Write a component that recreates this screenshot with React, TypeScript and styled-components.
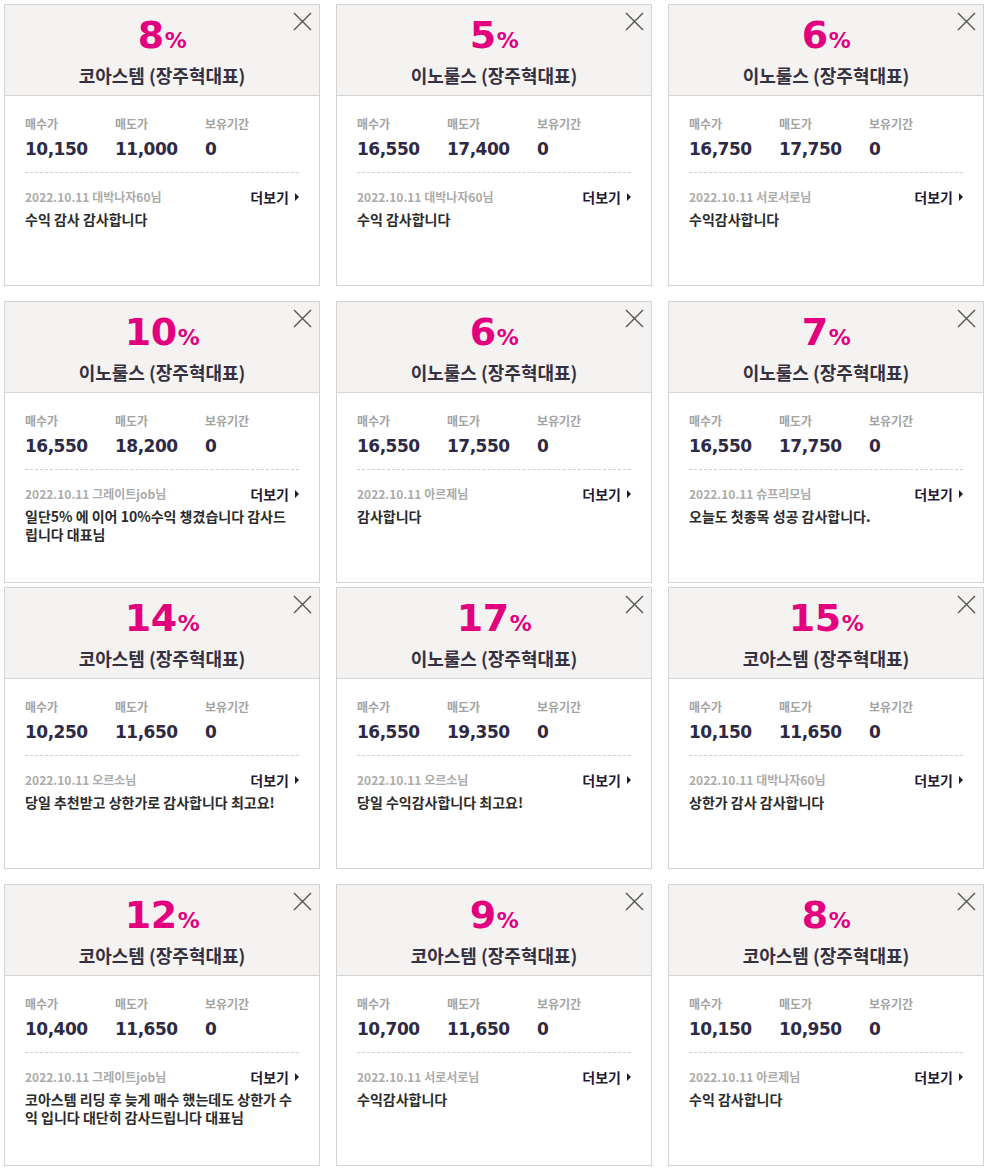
import React from "react";
import styled, { createGlobalStyle } from "styled-components";

const Global = createGlobalStyle`
  html, body { margin: 0; padding: 0; background: #fff; }
  body { font-family: "Noto Sans CJK KR", "Noto Sans", sans-serif; }
  * { box-sizing: border-box; }
`;

const Page = styled.div`
  width: 986px;
  padding: 4px 2px 4px 4px;
`;

const Row = styled.div<{ $gap: number }>`
  display: flex;
  gap: 16px;
  margin-top: ${(p) => p.$gap}px;
`;

const Card = styled.div`
  position: relative;
  width: 316px;
  height: 282px;
  border: 1px solid #d3d3d3;
  background: #fff;
  display: flex;
  flex-direction: column;
`;

const Header = styled.div`
  height: 91px;
  background: #f5f3f1;
  border-bottom: 1px solid #d6d6d6;
  text-align: center;
  padding-top: 10px;
`;

const Percent = styled.div`
  font-family: "DejaVu Sans", "Noto Sans CJK KR", sans-serif;
  font-weight: 700;
  font-size: 38px;
  line-height: 40px;
  color: #e2007e;
  letter-spacing: -0.5px;
`;

const PercentSign = styled.span`
  font-family: "DejaVu Sans", sans-serif;
  font-weight: 700;
  font-size: 22px;
  margin-left: 1px;
`;

const Title = styled.div`
  margin-top: 2px;
  font-size: 18px;
  line-height: 24px;
  font-weight: 700;
  color: #35303f;
`;

const Close = styled.button`
  position: absolute;
  top: 6px;
  right: 7px;
  width: 20px;
  height: 20px;
  padding: 0;
  border: 0;
  background: transparent;
  cursor: pointer;
  display: flex;
  align-items: center;
  justify-content: center;
`;

const Body = styled.div`
  padding: 20px 20px 0 20px;
`;

const Stats = styled.div`
  display: flex;
  padding-bottom: 11px;
  border-bottom: 1px dashed #cfcfcf;
`;

const Stat = styled.div`
  width: 90px;
`;

const Label = styled.div`
  font-size: 12px;
  line-height: 16px;
  font-weight: 700;
  color: #a3a3a3;
`;

const Value = styled.div`
  margin-top: 5px;
  font-family: "DejaVu Sans", "Noto Sans CJK KR", sans-serif;
  font-size: 17px;
  line-height: 24px;
  font-weight: 700;
  letter-spacing: -0.5px;
  color: #2e2944;
`;

const Meta = styled.div`
  margin-top: 16px;
  display: flex;
  justify-content: space-between;
  align-items: center;
`;

const DateUser = styled.div`
  font-size: 12px;
  line-height: 16px;
  font-weight: 700;
  color: #ababab;
`;

const More = styled.a`
  display: flex;
  align-items: center;
  gap: 6px;
  font-size: 14px;
  line-height: 16px;
  font-weight: 700;
  color: #1f1b33;
  text-decoration: none;
  cursor: pointer;
`;

const Arrow = styled.span`
  width: 0;
  height: 0;
  border-top: 4px solid transparent;
  border-bottom: 4px solid transparent;
  border-left: 4px solid #1f1b33;
`;

const Comment = styled.p`
  margin: 5px 0 0 0;
  padding-right: 5px;
  font-size: 14px;
  line-height: 18px;
  font-weight: 700;
  color: #2b2b2b;
  word-break: break-all;
`;

type Item = {
  pct: number;
  name: string;
  buy: string;
  sell: string;
  hold: string;
  user: string;
  text: string;
};

const rows: { gap: number; items: Item[] }[] = [
  {
    gap: 0,
    items: [
      { pct: 8, name: "코아스템", buy: "10,150", sell: "11,000", hold: "0", user: "대박나자60님", text: "수익 감사 감사합니다" },
      { pct: 5, name: "이노룰스", buy: "16,550", sell: "17,400", hold: "0", user: "대박나자60님", text: "수익 감사합니다" },
      { pct: 6, name: "이노룰스", buy: "16,750", sell: "17,750", hold: "0", user: "서로서로님", text: "수익감사합니다" },
    ],
  },
  {
    gap: 15,
    items: [
      { pct: 10, name: "이노룰스", buy: "16,550", sell: "18,200", hold: "0", user: "그레이트job님", text: "일단5% 에 이어 10%수익 챙겼습니다 감사드립니다 대표님" },
      { pct: 6, name: "이노룰스", buy: "16,550", sell: "17,550", hold: "0", user: "아르제님", text: "감사합니다" },
      { pct: 7, name: "이노룰스", buy: "16,550", sell: "17,750", hold: "0", user: "슈프리모님", text: "오늘도 첫종목 성공 감사합니다." },
    ],
  },
  {
    gap: 4,
    items: [
      { pct: 14, name: "코아스템", buy: "10,250", sell: "11,650", hold: "0", user: "오르소님", text: "당일 추천받고 상한가로 감사합니다 최고요!" },
      { pct: 17, name: "이노룰스", buy: "16,550", sell: "19,350", hold: "0", user: "오르소님", text: "당일 수익감사합니다 최고요!" },
      { pct: 15, name: "코아스템", buy: "10,150", sell: "11,650", hold: "0", user: "대박나자60님", text: "상한가 감사 감사합니다" },
    ],
  },
  {
    gap: 15,
    items: [
      { pct: 12, name: "코아스템", buy: "10,400", sell: "11,650", hold: "0", user: "그레이트job님", text: "코아스템 리딩 후 늦게 매수 했는데도 상한가 수익 입니다 대단히 감사드립니다 대표님" },
      { pct: 9, name: "코아스템", buy: "10,700", sell: "11,650", hold: "0", user: "서로서로님", text: "수익감사합니다" },
      { pct: 8, name: "코아스템", buy: "10,150", sell: "10,950", hold: "0", user: "아르제님", text: "수익 감사합니다" },
    ],
  },
];

const CloseIcon = () => (
  <svg width="19" height="19" viewBox="0 0 19 19" fill="none">
    <path d="M1 1L18 18M18 1L1 18" stroke="#555" strokeWidth="1.4" />
  </svg>
);

const ReviewCard = ({ item }: { item: Item }) => (
  <Card>
    <Header>
      <Percent>
        {item.pct}
        <PercentSign>%</PercentSign>
      </Percent>
      <Title>{item.name} (장주혁대표)</Title>
    </Header>
    <Close aria-label="닫기">
      <CloseIcon />
    </Close>
    <Body>
      <Stats>
        <Stat>
          <Label>매수가</Label>
          <Value>{item.buy}</Value>
        </Stat>
        <Stat>
          <Label>매도가</Label>
          <Value>{item.sell}</Value>
        </Stat>
        <Stat>
          <Label>보유기간</Label>
          <Value>{item.hold}</Value>
        </Stat>
      </Stats>
      <Meta>
        <DateUser>2022.10.11 {item.user}</DateUser>
        <More>
          더보기
          <Arrow />
        </More>
      </Meta>
      <Comment>{item.text}</Comment>
    </Body>
  </Card>
);

export default function App() {
  return (
    <>
      <Global />
      <Page>
        {rows.map((r, i) => (
          <Row key={i} $gap={r.gap}>
            {r.items.map((it, j) => (
              <ReviewCard key={j} item={it} />
            ))}
          </Row>
        ))}
      </Page>
    </>
  );
}
